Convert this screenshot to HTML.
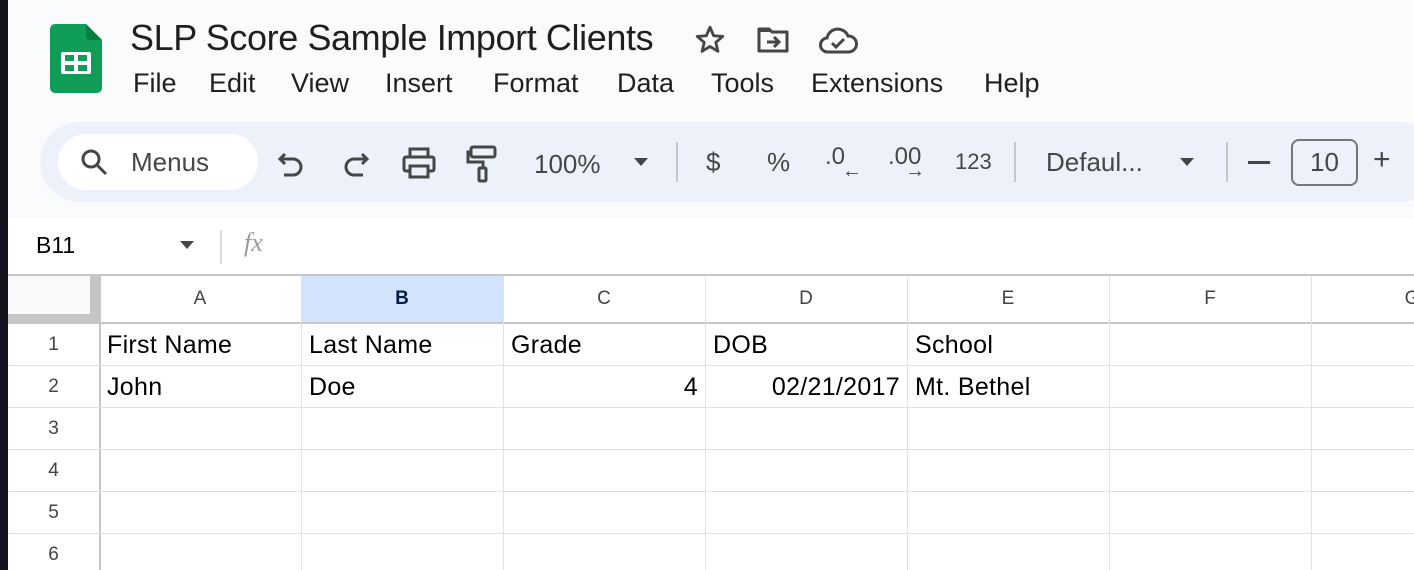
<!DOCTYPE html>
<html><head><style>
*{margin:0;padding:0;box-sizing:border-box}
body{width:1414px;height:570px;overflow:hidden;background:#f9fbfd;font-family:"Liberation Sans",Arial,sans-serif;position:relative}
.abs{position:absolute}
.side{left:0;top:0;width:8px;height:570px;background:#12131f}
.title{left:130px;top:17px;font-size:36px;color:#1f1f1f;letter-spacing:-0.4px}
.menu{top:68px;font-size:27px;color:#1f1f1f}
.tb{left:40px;top:122px;width:1400px;height:80px;background:#edf2fa;border-radius:40px}
.search{left:58px;top:134px;width:200px;height:56px;background:#fff;border-radius:28px}
.t{color:#444746;font-size:26px}
.sep{width:2px;height:40px;background:#c7c7c7;top:142px}
.fb{left:8px;top:218px;width:1406px;height:57px;background:#fff}
.grid{left:8px;top:275px;width:1406px;height:295px;background:#fff}
.vl{width:1px;background:#e1e1e1;top:275px;height:295px}
.hl{height:1px;background:#e1e1e1;left:8px;width:1406px}
.ch{top:288px;font-size:19px;color:#444;text-align:center;width:202px}
.rh{left:8px;width:91px;text-align:center;font-size:19px;color:#444}
.c{font-size:25px;color:#000;letter-spacing:0.3px}
</style></head><body>
<div class="abs side"></div>
<svg class="abs" style="left:50px;top:24px" width="52" height="69" viewBox="0 0 52 69"><path d="M5 0H36L52 16V64a5 5 0 0 1-5 5H5a5 5 0 0 1-5-5V5a5 5 0 0 1 5-5z" fill="#0f9d58"/><path d="M36 0L52 16H40a4 4 0 0 1-4-4z" fill="#087f3f"/><rect x="11" y="28" width="30" height="22" rx="2" fill="#fff"/><rect x="15" y="31" width="9" height="6" fill="#0f9d58"/><rect x="28" y="31" width="9" height="6" fill="#0f9d58"/><rect x="15" y="41" width="9" height="6" fill="#0f9d58"/><rect x="28" y="41" width="9" height="6" fill="#0f9d58"/></svg>
<div class="abs title">SLP Score Sample Import Clients</div>
<svg class="abs" style="left:693px;top:23px" width="34" height="34" viewBox="0 0 24 24"><path d="M12 3l2.6 6 6.4.5-4.9 4.2 1.5 6.3L12 16.6 6.4 20l1.5-6.3L3 9.5 9.4 9z" fill="none" stroke="#444746" stroke-width="2" stroke-linejoin="round"/></svg>
<svg class="abs" style="left:756px;top:25px" width="34" height="30" viewBox="0 0 34 30"><path d="M3 4h10l3 3h15v19H3z" fill="none" stroke="#444746" stroke-width="3" stroke-linejoin="round"/><path d="M3 4h10l3 3H3z" fill="#444746"/><path d="M11 17h11M18 12l5 5-5 5" fill="none" stroke="#444746" stroke-width="3"/></svg>
<svg class="abs" style="left:818px;top:24px" width="40" height="32" viewBox="0 0 40 32"><path d="M10 28a7 7 0 0 1-1-14 11 11 0 0 1 21-2 8 8 0 0 1 1 16z" fill="none" stroke="#444746" stroke-width="3"/><path d="M14 19l4 4 8-8" fill="none" stroke="#444746" stroke-width="3"/></svg>
<div class="abs menu" style="left:133px">File</div>
<div class="abs menu" style="left:209px">Edit</div>
<div class="abs menu" style="left:291px">View</div>
<div class="abs menu" style="left:385px">Insert</div>
<div class="abs menu" style="left:493px">Format</div>
<div class="abs menu" style="left:617px">Data</div>
<div class="abs menu" style="left:711px">Tools</div>
<div class="abs menu" style="left:811px">Extensions</div>
<div class="abs menu" style="left:984px">Help</div>
<div class="abs tb"></div>
<div class="abs search"></div>
<svg class="abs" style="left:78px;top:146px" width="32" height="32" viewBox="0 0 32 32"><circle cx="13" cy="13" r="8" fill="none" stroke="#444746" stroke-width="3"/><path d="M19 19l9 9" stroke="#444746" stroke-width="3"/></svg>
<div class="abs t" style="left:131px;top:147px">Menus</div>
<svg class="abs" style="left:277px;top:148px" width="30" height="32" viewBox="0 0 30 32"><path d="M8 6L3 11l5 5" fill="none" stroke="#444746" stroke-width="3"/><path d="M3 11h13a8 8 0 0 1 0 16H7" fill="none" stroke="#444746" stroke-width="3"/></svg>
<svg class="abs" style="left:340px;top:148px" width="30" height="32" viewBox="0 0 30 32"><path d="M22 6l5 5-5 5" fill="none" stroke="#444746" stroke-width="3"/><path d="M27 11H14a8 8 0 0 0 0 16h9" fill="none" stroke="#444746" stroke-width="3"/></svg>
<svg class="abs" style="left:401px;top:146px" width="36" height="34" viewBox="0 0 36 34"><rect x="9" y="3" width="18" height="8" fill="none" stroke="#444746" stroke-width="3"/><rect x="3" y="11" width="30" height="14" rx="2" fill="none" stroke="#444746" stroke-width="3"/><rect x="9" y="20" width="18" height="11" fill="#edf2fa" stroke="#444746" stroke-width="3"/></svg>
<svg class="abs" style="left:465px;top:144px" width="34" height="40" viewBox="0 0 34 40"><rect x="6" y="3" width="24" height="10" rx="2" fill="none" stroke="#444746" stroke-width="3"/><path d="M6 8H3v10h15v6" fill="none" stroke="#444746" stroke-width="3"/><rect x="14" y="24" width="7" height="13" rx="1" fill="none" stroke="#444746" stroke-width="3"/></svg>
<div class="abs t" style="left:534px;top:149px">100%</div>
<div class="abs" style="left:634px;top:158px;border:7px solid transparent;border-top:8px solid #444746"></div>
<div class="abs sep" style="left:676px"></div>
<div class="abs t" style="left:706px;top:147px">$</div>
<div class="abs t" style="left:767px;top:147px">%</div>
<div class="abs t" style="left:825px;top:143px;font-size:24px">.0</div>
<div class="abs t" style="left:842px;top:160px;font-size:20px">←</div>
<div class="abs t" style="left:888px;top:143px;font-size:24px">.00</div>
<div class="abs t" style="left:905px;top:160px;font-size:20px">→</div>
<div class="abs t" style="left:955px;top:149px;font-size:22px">123</div>
<div class="abs sep" style="left:1014px"></div>
<div class="abs t" style="left:1046px;top:147px">Defaul...</div>
<div class="abs" style="left:1180px;top:158px;border:7px solid transparent;border-top:8px solid #444746"></div>
<div class="abs sep" style="left:1226px"></div>
<div class="abs" style="left:1248px;top:161px;width:22px;height:3px;background:#444746"></div>
<div class="abs" style="left:1291px;top:139px;width:67px;height:47px;border:2px solid #747775;border-radius:8px;text-align:center;font-size:26px;color:#444746;line-height:43px">10</div>
<div class="abs t" style="left:1373px;top:143px;font-size:30px">+</div>
<div class="abs fb"></div>
<div class="abs" style="left:36px;top:232px;font-size:23px;color:#000">B11</div>
<div class="abs" style="left:180px;top:241px;border:7px solid transparent;border-top:8px solid #444746"></div>
<div class="abs" style="left:220px;top:230px;width:2px;height:34px;background:#dadce0"></div>
<div class="abs" style="left:244px;top:228px;font-size:26px;color:#999;font-family:'Liberation Serif',serif;font-style:italic">fx</div>
<div class="abs grid"></div>
<div class="abs" style="left:301px;top:276px;width:202px;height:46px;background:#d3e3fd"></div>
<div class="abs" style="left:8px;top:276px;width:82px;height:38px;background:#f8f9fa"></div>
<div class="abs" style="left:8px;top:274px;width:1406px;height:2px;background:#c4c7c5"></div>
<div class="abs" style="left:8px;top:314px;width:91px;height:9px;background:#c4c7c5"></div>
<div class="abs" style="left:90px;top:276px;width:9px;height:47px;background:#c4c7c5"></div>
<div class="abs" style="left:8px;top:322px;width:1406px;height:2px;background:#c4c7c5"></div>
<div class="abs vl" style="left:99px;width:2px;background:#c4c7c5"></div>
<div class="abs vl" style="left:301px"></div>
<div class="abs vl" style="left:503px"></div>
<div class="abs vl" style="left:705px"></div>
<div class="abs vl" style="left:907px"></div>
<div class="abs vl" style="left:1109px"></div>
<div class="abs vl" style="left:1311px"></div>
<div class="abs hl" style="top:365px"></div>
<div class="abs hl" style="top:407px"></div>
<div class="abs hl" style="top:449px"></div>
<div class="abs hl" style="top:491px"></div>
<div class="abs hl" style="top:533px"></div>
<div class="abs ch" style="left:99px">A</div>
<div class="abs ch" style="left:301px;font-weight:bold;color:#041e49">B</div>
<div class="abs ch" style="left:503px">C</div>
<div class="abs ch" style="left:705px">D</div>
<div class="abs ch" style="left:907px">E</div>
<div class="abs ch" style="left:1109px">F</div>
<div class="abs ch" style="left:1311px">G</div>
<div class="abs rh" style="top:334px">1</div>
<div class="abs rh" style="top:376px">2</div>
<div class="abs rh" style="top:418px">3</div>
<div class="abs rh" style="top:460px">4</div>
<div class="abs rh" style="top:502px">5</div>
<div class="abs rh" style="top:544px">6</div>
<div class="abs c" style="left:107px;top:331px">First Name</div>
<div class="abs c" style="left:309px;top:331px">Last Name</div>
<div class="abs c" style="left:511px;top:331px">Grade</div>
<div class="abs c" style="left:713px;top:331px">DOB</div>
<div class="abs c" style="left:915px;top:331px">School</div>
<div class="abs c" style="left:107px;top:373px">John</div>
<div class="abs c" style="left:309px;top:373px">Doe</div>
<div class="abs c" style="left:503px;width:195px;text-align:right;top:373px">4</div>
<div class="abs c" style="left:705px;width:195px;text-align:right;top:373px">02/21/2017</div>
<div class="abs c" style="left:915px;top:373px">Mt. Bethel</div>
</body></html>
